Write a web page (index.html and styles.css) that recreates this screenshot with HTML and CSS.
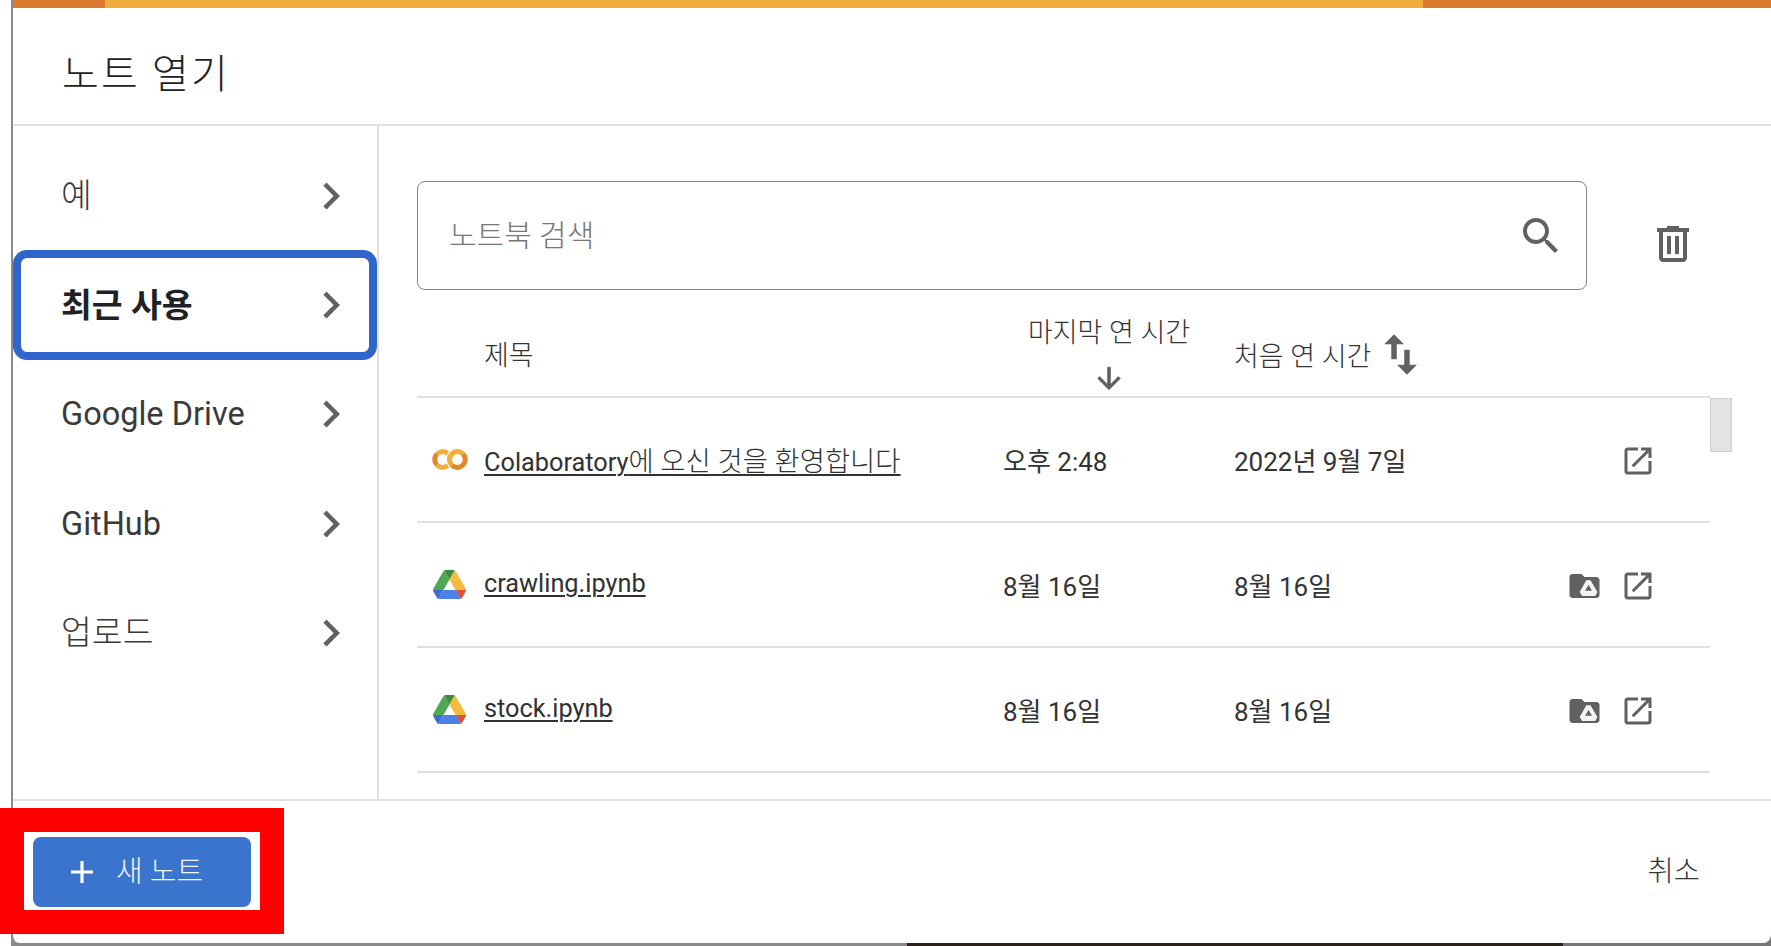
FILE: index.html
```html
<!DOCTYPE html>
<html lang="ko">
<head>
<meta charset="utf-8">
<title>노트 열기</title>
<link rel="stylesheet" href="styles.css">
</head>
<body>
<div class="stage">
  <div class="dialog">
    <div class="topbar"><span class="seg seg-a"></span><span class="seg seg-b"></span><span class="seg seg-c"></span></div>
    <header class="dialog-header"><h1 class="dialog-title">노트 열기</h1></header>
    <div class="dialog-body">
      <nav class="sidebar">
        <div class="nav-item"><span class="nav-ko">예</span><svg class="chev" viewBox="8 6 8 12"><path d="M10 6L8.59 7.41 13.17 12l-4.58 4.59L10 18l6-6z"/></svg></div>
        <div class="nav-item selected"><span class="nav-ko">최근 사용</span><svg class="chev" viewBox="8 6 8 12"><path d="M10 6L8.59 7.41 13.17 12l-4.58 4.59L10 18l6-6z"/></svg></div>
        <div class="nav-item"><span>Google Drive</span><svg class="chev" viewBox="8 6 8 12"><path d="M10 6L8.59 7.41 13.17 12l-4.58 4.59L10 18l6-6z"/></svg></div>
        <div class="nav-item"><span>GitHub</span><svg class="chev" viewBox="8 6 8 12"><path d="M10 6L8.59 7.41 13.17 12l-4.58 4.59L10 18l6-6z"/></svg></div>
        <div class="nav-item"><span class="nav-ko">업로드</span><svg class="chev" viewBox="8 6 8 12"><path d="M10 6L8.59 7.41 13.17 12l-4.58 4.59L10 18l6-6z"/></svg></div>
      </nav>
      <main class="content">
        <div class="search-row">
          <div class="search-box">
            <span class="search-placeholder">노트북 검색</span>
            <svg class="icon-48" viewBox="0 0 24 24"><path d="M15.5 14h-.79l-.28-.27C15.41 12.59 16 11.11 16 9.5 16 5.91 13.09 3 9.5 3S3 5.91 3 9.5 5.91 16 9.5 16c1.61 0 3.09-.59 4.23-1.57l.27.28v.79l5 4.99L20.49 19l-4.99-5zm-6 0C7.01 14 5 11.99 5 9.5S7.01 5 9.5 5 14 7.01 14 9.5 11.99 14 9.5 14z"/></svg>
          </div>
          <svg class="icon-48 trash" viewBox="0 0 24 24"><path d="M15 4V3H9v1H4v2h1v13c0 1.1.9 2 2 2h10c1.1 0 2-.9 2-2V6h1V4h-5zm2 15H7V6h10v13zM9 8h2v9H9zm4 0h2v9h-2z"/></svg>
        </div>
        <div class="table-head">
          <span class="head-title">제목</span>
          <div class="head-last">
            <span>마지막 연 시간</span>
            <svg class="arrow-down" viewBox="3.5 3.5 17 17"><path d="M20 12l-1.41-1.41L13 16.17V4h-2v12.17l-5.58-5.59L4 12l8 8 8-8z"/></svg>
          </div>
          <div class="head-first">
            <span>처음 연 시간</span>
            <svg class="swap" viewBox="4.5 2.5 15 19"><path d="M16 17.01V10h-2v7.01h-3L15 21l4-3.99h-3zM9 3L5 6.99h3V14h2V6.99h3L9 3z"/></svg>
          </div>
        </div>
        <div class="list-wrap">
          <div class="rows">
            <div class="row">
              <svg class="logo-colab" viewBox="0 5 24 14">
                <path fill="#e2862c" d="M4.54,9.46,2.19,7.1a6.93,6.93,0,0,0,0,9.79l2.36-2.36A3.59,3.59,0,0,1,4.54,9.46Z"/>
                <path fill="#f2ae38" d="M2.19,7.1,4.54,9.46a3.59,3.59,0,0,1,5.08,0l1.71-2.93h0l-.1-.08h0A6.93,6.93,0,0,0,2.19,7.1Z"/>
                <path fill="#f2ae38" d="M11.34,17.46h0L9.62,14.54a3.59,3.59,0,0,1-5.08,0L2.19,16.9a6.93,6.93,0,0,0,9,.65l.11-.09"/>
                <path fill="#f2ae38" d="M12,7.1a6.93,6.93,0,0,0,0,9.79l2.36-2.36a3.59,3.59,0,1,1,5.08-5.08L21.81,7.1A6.93,6.93,0,0,0,12,7.1Z"/>
                <path fill="#e2862c" d="M21.81,7.1,19.46,9.46a3.59,3.59,0,0,1-5.08,5.08L12,16.9A6.93,6.93,0,0,0,21.81,7.1Z"/>
              </svg>
              <a class="file-name">Colaboratory<span class="name-ko">에 오신 것을 환영합니다</span></a>
              <span class="date">오후 2:48</span>
              <span class="date">2022년 9월 7일</span>
              <div class="actions">
                <svg class="icon-36" viewBox="0 0 24 24"><path d="M19 19H5V5h7V3H5c-1.11 0-2 .9-2 2v14c0 1.1.89 2 2 2h14c1.1 0 2-.9 2-2v-7h-2v7zM14 3v2h3.59l-9.83 9.83 1.41 1.41L19 6.41V10h2V3h-7z"/></svg>
              </div>
            </div>
            <div class="row">
              <svg class="logo-drive" viewBox="0 0 87.3 78">
                <path fill="#3a6fd0" d="m6.6 66.85 3.85 6.65c.8 1.4 1.95 2.5 3.3 3.3l13.75-23.8h-27.5c0 1.55.4 3.1 1.2 4.5z"/>
                <path fill="#4fa855" d="m43.65 25-13.75-23.8c-1.35.8-2.5 1.9-3.3 3.3l-25.4 44a9.06 9.06 0 0 0 -1.2 4.5h27.5z"/>
                <path fill="#d9523f" d="m73.55 76.8c1.35-.8 2.5-1.9 3.3-3.3l1.6-2.75 7.65-13.25c.8-1.4 1.2-2.95 1.2-4.5h-27.502l5.852 11.5z"/>
                <path fill="#3b8a3e" d="m43.65 25 13.75-23.8c-1.35-.8-2.9-1.2-4.5-1.2h-18.5c-1.6 0-3.15.45-4.5 1.2z"/>
                <path fill="#4a80e8" d="m59.8 53h-32.3l-13.75 23.8c1.35.8 2.9 1.2 4.5 1.2h50.8c1.6 0 3.15-.45 4.5-1.2z"/>
                <path fill="#f3bc40" d="m73.4 26.5-12.7-22c-.8-1.4-1.95-2.5-3.3-3.3l-13.75 23.8 16.15 28h27.45c0-1.55-.4-3.1-1.2-4.5z"/>
              </svg>
              <a class="file-name">crawling.ipynb</a>
              <span class="date">8월 16일</span>
              <span class="date">8월 16일</span>
              <div class="actions">
                <svg class="folder" viewBox="2 4 20 16"><path fill="#616161" d="M10 4H4c-1.1 0-2 .9-2 2v12c0 1.1.9 2 2 2h16c1.1 0 2-.9 2-2V8c0-1.1-.9-2-2-2h-8l-2-2z"/><path fill="#f4f4f4" fill-rule="evenodd" d="M13.2 8.2h2.8l4.6 7.8-1.4 2.6h-8.8l-1.6-2.6zM14.7 11.2l-2.3 4h4.6z"/></svg>
                <svg class="icon-36" viewBox="0 0 24 24"><path d="M19 19H5V5h7V3H5c-1.11 0-2 .9-2 2v14c0 1.1.89 2 2 2h14c1.1 0 2-.9 2-2v-7h-2v7zM14 3v2h3.59l-9.83 9.83 1.41 1.41L19 6.41V10h2V3h-7z"/></svg>
              </div>
            </div>
            <div class="row">
              <svg class="logo-drive" viewBox="0 0 87.3 78">
                <path fill="#3a6fd0" d="m6.6 66.85 3.85 6.65c.8 1.4 1.95 2.5 3.3 3.3l13.75-23.8h-27.5c0 1.55.4 3.1 1.2 4.5z"/>
                <path fill="#4fa855" d="m43.65 25-13.75-23.8c-1.35.8-2.5 1.9-3.3 3.3l-25.4 44a9.06 9.06 0 0 0 -1.2 4.5h27.5z"/>
                <path fill="#d9523f" d="m73.55 76.8c1.35-.8 2.5-1.9 3.3-3.3l1.6-2.75 7.65-13.25c.8-1.4 1.2-2.95 1.2-4.5h-27.502l5.852 11.5z"/>
                <path fill="#3b8a3e" d="m43.65 25 13.75-23.8c-1.35-.8-2.9-1.2-4.5-1.2h-18.5c-1.6 0-3.15.45-4.5 1.2z"/>
                <path fill="#4a80e8" d="m59.8 53h-32.3l-13.75 23.8c1.35.8 2.9 1.2 4.5 1.2h50.8c1.6 0 3.15-.45 4.5-1.2z"/>
                <path fill="#f3bc40" d="m73.4 26.5-12.7-22c-.8-1.4-1.95-2.5-3.3-3.3l-13.75 23.8 16.15 28h27.45c0-1.55-.4-3.1-1.2-4.5z"/>
              </svg>
              <a class="file-name">stock.ipynb</a>
              <span class="date">8월 16일</span>
              <span class="date">8월 16일</span>
              <div class="actions">
                <svg class="folder" viewBox="2 4 20 16"><path fill="#616161" d="M10 4H4c-1.1 0-2 .9-2 2v12c0 1.1.9 2 2 2h16c1.1 0 2-.9 2-2V8c0-1.1-.9-2-2-2h-8l-2-2z"/><path fill="#f4f4f4" fill-rule="evenodd" d="M13.2 8.2h2.8l4.6 7.8-1.4 2.6h-8.8l-1.6-2.6zM14.7 11.2l-2.3 4h4.6z"/></svg>
                <svg class="icon-36" viewBox="0 0 24 24"><path d="M19 19H5V5h7V3H5c-1.11 0-2 .9-2 2v14c0 1.1.89 2 2 2h14c1.1 0 2-.9 2-2v-7h-2v7zM14 3v2h3.59l-9.83 9.83 1.41 1.41L19 6.41V10h2V3h-7z"/></svg>
              </div>
            </div>
          </div>
          <div class="scroll-track"><div class="scroll-thumb"></div></div>
        </div>
      </main>
    </div>
    <footer class="dialog-footer">
      <span class="cancel">취소</span>
    </footer>
  </div>
</div>
<div class="annotation">
  <button class="new-note">
    <svg class="plus" viewBox="5 5 14 14"><path d="M19 13h-6v6h-2v-6H5v-2h6V5h2v6h6v2z"/></svg>
    <span class="new-label">새 노트</span>
  </button>
</div>
</body>
</html>
```
FILE: styles.css
```css
* { box-sizing: border-box; }
html, body { margin: 0; height: 100%; overflow: hidden; background: #fff; }
body { font-family: Roboto, "Noto Sans CJK KR", sans-serif; color: #202124; position: relative; }

.stage {
  height: 946px;
  margin-left: 11px;
  padding-bottom: 3px;
  background: linear-gradient(90deg, #8a8a8a 896px, #2a211b 896px 1552px, #777 1552px);
}
.dialog {
  height: 943px;
  display: flex;
  flex-direction: column;
  background: #fff;
  border-left: 2px solid #8a8a8a;
  border-radius: 0 0 8px 8px;
  overflow: hidden;
}

.topbar { display: flex; height: 8px; flex: none; }
.seg { display: block; height: 100%; }
.seg-a { width: 92px; background: #dc7a2f; }
.seg-b { width: 1318px; background: #f0ae3c; }
.seg-c { flex: 1; background: #dc7a2f; }

.dialog-header {
  flex: none;
  height: 118px;
  padding: 10px 0 0 49px;
  display: flex;
  align-items: center;
  border-bottom: 2px solid #e0e0e0;
}
.dialog-title { margin: 0; font-size: 40px; font-weight: 300; letter-spacing: 2.2px; color: #222; }

.dialog-body { flex: 1; display: flex; min-height: 0; }

.sidebar {
  flex: none;
  width: 366px;
  padding-top: 15px;
  border-right: 2px solid #e0e0e0;
}
.nav-item {
  height: 109.3px;
  display: flex;
  align-items: center;
  justify-content: space-between;
  padding: 0 37px 0 48px;
  font-size: 32.5px;
  color: #3a3a3a;
  border-radius: 14px;
}
.nav-ko { margin-top: -7px; font-size: 33.5px; font-weight: 300; }
.nav-item.selected {
  color: #202124;
  box-shadow: inset 0 0 0 8px #3065cc;
}
.nav-item.selected .nav-ko { font-weight: 700; margin-top: -5px; }
.chev { width: 18px; height: 28px; fill: #616161; flex: none; }

.content { flex: 1; min-width: 0; padding: 55px 39px 0 38px; }

.search-row { display: flex; align-items: center; gap: 62px; padding-right: 35px; height: 109px; }
.search-box {
  width: 1170px;
  height: 109px;
  display: flex;
  align-items: center;
  justify-content: space-between;
  padding: 0 21px 0 31px;
  border: 1px solid #80868b;
  border-radius: 8px;
}
.search-placeholder { font-size: 30px; font-weight: 300; color: #777; margin-top: -6px; }
.icon-48 { width: 48px; height: 48px; fill: #616161; flex: none; }
.trash { margin-top: 17px; }

.table-head {
  display: grid;
  grid-template-columns: 586px 231px 1fr;
  height: 108px;
  margin-right: 22px;
  font-size: 27px;
  font-weight: 300;
  color: #333;
  border-bottom: 2px solid #e0e0e0;
}
.head-title { padding-left: 67px; align-self: center; margin-top: 20px; }
.head-last {
  width: 162px;
  margin-left: 25px;
  display: flex;
  flex-direction: column;
  align-items: center;
  padding-top: 21px;
  white-space: nowrap;
}
.arrow-down { width: 24px; height: 25px; fill: #616161; stroke: #616161; stroke-width: .5; margin-top: 16px; }
.head-first { display: flex; align-items: center; gap: 13px; margin-top: 22px; }
.swap { width: 33px; height: 41px; fill: #616161; stroke: #616161; stroke-width: .5; }

.list-wrap { display: flex; align-items: flex-start; }
.rows { flex: 1; min-width: 0; }
.row {
  display: grid;
  grid-template-columns: 67px 519px 231px 316px 160px;
  align-items: center;
  height: 125px;
  font-size: 26px;
  border-bottom: 2px solid #e0e0e0;
}
.logo-colab { width: 36px; height: 21px; margin-left: 15px; }
.logo-drive { width: 33px; height: 29.5px; margin-left: 16px; }
.file-name { font-size: 25.3px; margin-top: -2px; text-decoration: underline; text-decoration-thickness: 2px; text-underline-offset: 3px; color: #303134; white-space: nowrap; }
.name-ko { font-size: 27.4px; font-weight: 300; }
.date { color: #333; white-space: nowrap; }
.actions { display: flex; align-items: center; justify-content: flex-end; gap: 20px; padding-right: 54px; margin-top: 3px; }
.icon-36 { width: 36px; height: 36px; fill: #616161; flex: none; }
.folder { width: 31px; height: 24px; flex: none; }

.scroll-track { flex: none; width: 22px; }
.scroll-thumb { height: 54px; background: #e3e3e3; border: 1px solid #d0d0d0; }

.dialog-footer {
  flex: none;
  height: 144px;
  display: flex;
  align-items: center;
  justify-content: flex-end;
  padding: 0 71px 8px 0;
  border-top: 2px solid #e0e0e0;
}
.cancel { font-size: 28.5px; font-weight: 300; color: #333; }

.annotation {
  position: absolute;
  left: 0;
  top: 808px;
  width: 284px;
  height: 126px;
  padding: 5px 9px;
  background: #fff;
  border: 24px solid #f00;
}
.new-note {
  width: 218px;
  height: 70px;
  display: flex;
  align-items: center;
  padding: 0 0 0 38px;
  gap: 23px;
  border: 0;
  border-radius: 8px;
  background: #3a74cd;
  color: #f2f5fb;
  font: inherit;
  font-size: 29px;
}
.new-label { margin-top: -6px; font-weight: 300; }
.plus { width: 22px; height: 22px; fill: #fff; flex: none; }
```
